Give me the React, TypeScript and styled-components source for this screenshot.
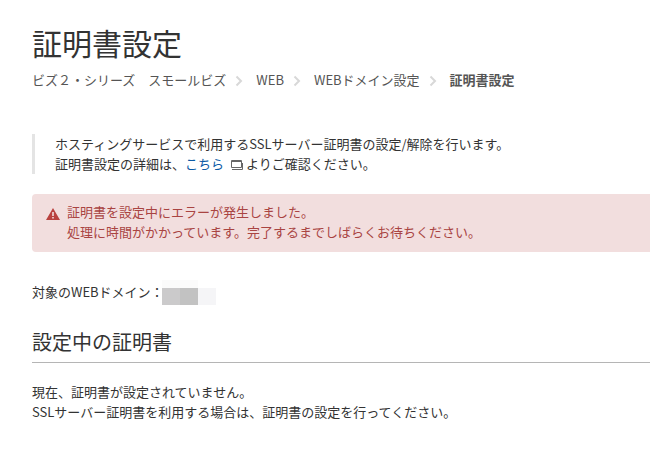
import styled, { createGlobalStyle } from "styled-components"

const GlobalStyle = createGlobalStyle`
  html, body {
    margin: 0;
    padding: 0;
    width: 650px;
    height: 450px;
    overflow: hidden;
    background: #fff;
  }
  body {
    font-family: "Noto Sans CJK JP", "Noto Sans", sans-serif;
    color: #333;
  }
`

const crumbs = ["WEB", "WEBドメイン設定"]

const Chevron = () => (
  <ChevronIcon viewBox="0 0 8 12" width="8" height="12" aria-hidden="true">
    <path d="M1.5 1.5 L6 6 L1.5 10.5" fill="none" stroke="#d8d8d8" strokeWidth="2" />
  </ChevronIcon>
)

export default function App() {
  return (
    <>
      <GlobalStyle />
      <Page>
        <Title>証明書設定</Title>
        <Breadcrumb>
          <span>ビズ２・シリーズ　スモールビズ</span>
          <Chevron />
          {crumbs.map((c) => (
            <Crumb key={c}>
              <span>{c}</span>
              <Chevron />
            </Crumb>
          ))}
          <strong>証明書設定</strong>
        </Breadcrumb>
        <Note>
          <p>ホスティングサービスで利用するSSLサーバー証明書の設定/解除を行います。</p>
          <p>
            証明書設定の詳細は、<NoteLink>こちら</NoteLink>
            <WindowIcon viewBox="0 0 12 10" width="12" height="10" aria-hidden="true">
              <path d="M0.5 0.5 H10.5 V7.5 H0.5 Z" fill="none" stroke="#666" />
              <path d="M0.5 1.5 H10.5" stroke="#666" />
              <path d="M1 9.5 H11.5 V3" fill="none" stroke="#666" />
            </WindowIcon>
            よりご確認ください。
          </p>
        </Note>
        <Alert>
          <AlertIcon viewBox="0 0 14 12" width="14" height="12" aria-hidden="true">
            <path
              fillRule="evenodd"
              d="M7 0 L14 12 H0 Z M6.2 4 H7.8 V8 H6.2 Z M6.2 9 H7.8 V10.5 H6.2 Z"
              fill="#b9423f"
            />
          </AlertIcon>
          <div>
            <p>証明書を設定中にエラーが発生しました。</p>
            <p>処理に時間がかかっています。完了するまでしばらくお待ちください。</p>
          </div>
        </Alert>
        <DomainRow>
          <span>対象のWEBドメイン：</span>
          <Mosaic aria-hidden="true">
            <MosaicCell $color="#fbfbfb" />
            <MosaicCell $color="#fbfbfb" />
            <MosaicCell $color="#fff" />
            <MosaicCell $color="#cbcacb" />
            <MosaicCell $color="#c2c2c2" />
            <MosaicCell $color="#f5f5f7" />
          </Mosaic>
        </DomainRow>
        <SectionTitle>設定中の証明書</SectionTitle>
        <Body>
          <p>現在、証明書が設定されていません。</p>
          <p>SSLサーバー証明書を利用する場合は、証明書の設定を行ってください。</p>
        </Body>
      </Page>
    </>
  )
}

const Page = styled.main`
  width: 650px;
  padding: 20px 0 0 32px;
  box-sizing: border-box;
  p {
    margin: 0;
  }
`

const Title = styled.h1`
  margin: 0;
  font-size: 30px;
  line-height: 44px;
  font-weight: 400;
  color: #333;
`

const Breadcrumb = styled.nav`
  display: flex;
  align-items: center;
  margin-top: 5px;
  height: 20px;
  font-size: 13px;
  color: #555;
  strong {
    font-weight: 700;
  }
`

const Crumb = styled.span`
  display: inline-flex;
  align-items: center;
`

const ChevronIcon = styled.svg`
  margin: 4px 13px 0 9px;
`

const Note = styled.section`
  margin-top: 45px;
  padding-left: 20px;
  border-left: 3px solid #e4e4e4;
  font-size: 13px;
  line-height: 20px;
  color: #333;
`

const NoteLink = styled.a`
  color: #0b5aa5;
`

const WindowIcon = styled.svg`
  margin: 0 3px 0 7px;
  vertical-align: -1px;
`

const Alert = styled.section`
  display: flex;
  align-items: flex-start;
  gap: 7px;
  margin-top: 20px;
  height: 58px;
  padding: 8px 0 0 14px;
  box-sizing: border-box;
  background: #f2dede;
  border-radius: 4px 0 0 4px;
  font-size: 13px;
  line-height: 20px;
  color: #a94442;
`

const AlertIcon = styled.svg`
  margin-top: 6px;
  flex: none;
`

const DomainRow = styled.div`
  display: flex;
  align-items: flex-start;
  margin-top: 28px;
  height: 25px;
  font-size: 13px;
  line-height: 24px;
`

const Mosaic = styled.div`
  display: grid;
  grid-template-columns: repeat(3, 18px);
  grid-template-rows: 8px 17px;
  margin-left: -2px;
`

const MosaicCell = styled.i<{ $color: string }>`
  background: ${(p) => p.$color};
`

const SectionTitle = styled.h2`
  margin: 22px 0 0;
  padding-bottom: 5px;
  border-bottom: 1px solid #b5b5b5;
  font-size: 20px;
  line-height: 30px;
  font-weight: 400;
  color: #333;
`

const Body = styled.div`
  margin-top: 19px;
  font-size: 13px;
  line-height: 20px;
  color: #333;
`
